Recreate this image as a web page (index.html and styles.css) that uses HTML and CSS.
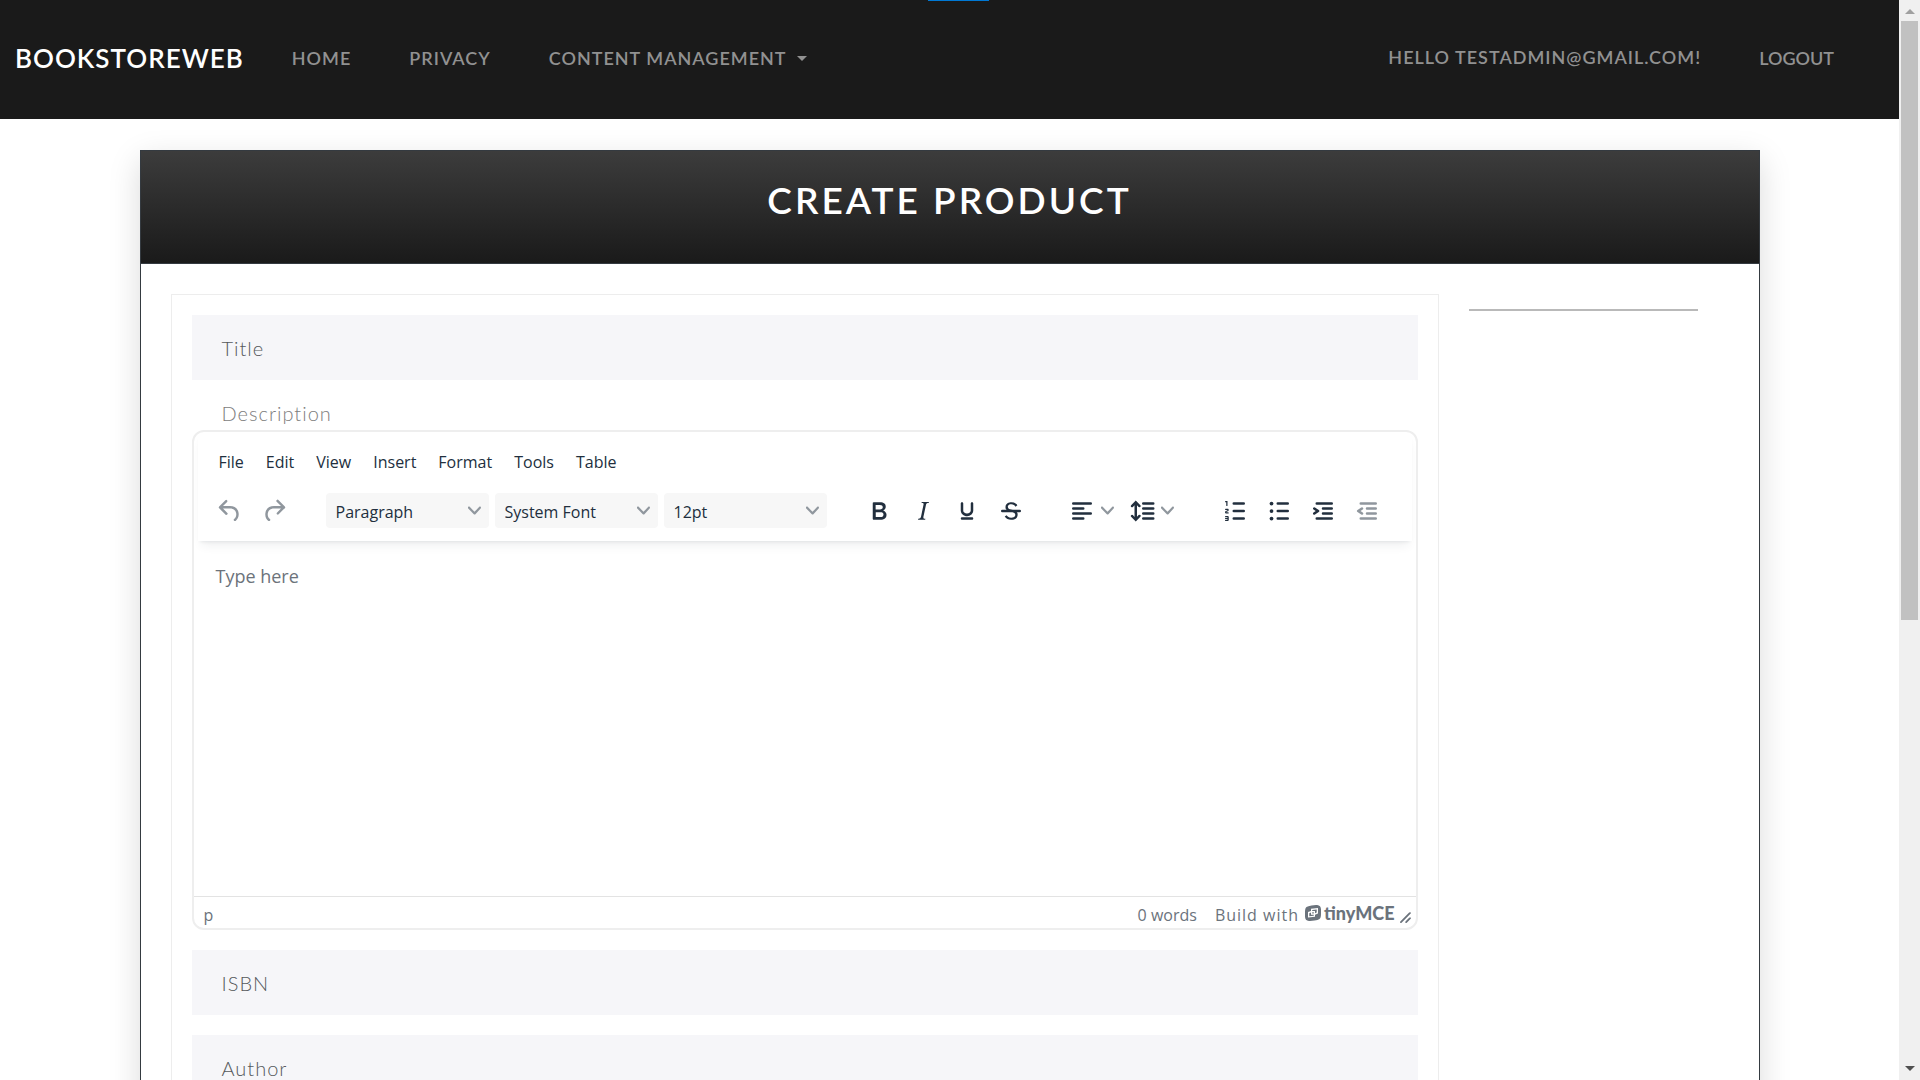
FILE: index.html
```html
<!DOCTYPE html>
<html lang="en">
<head>
<meta charset="utf-8">
<meta name="viewport" content="width=device-width, initial-scale=1">
<title>Create Product - BookStoreWeb</title>
<link rel="stylesheet" href="styles.css">
</head>
<body>
<div class="window-tab" aria-hidden="true"></div>
<header class="navbar">
  <a class="brand" href="#">BOOKSTOREWEB</a>
  <nav class="nav-main">
    <a class="nav-link" href="#">HOME</a>
    <a class="nav-link" href="#">PRIVACY</a>
    <a class="nav-link dropdown" href="#">CONTENT MANAGEMENT</a>
  </nav>
  <div class="nav-user">
    <a class="nav-link hello" href="#">HELLO TESTADMIN@GMAIL.COM!</a>
    <button class="logout" type="button">LOGOUT</button>
  </div>
</header>

<main class="container">
  <section class="card">
    <div class="card-header"><h1>CREATE PRODUCT</h1></div>
    <div class="card-body">
      <form class="panel">
        <div class="field">
          <input id="title" type="text"><label for="title">Title</label>
        </div>
        <div class="editor-field">
          <label class="editor-label" for="description">Description</label>
          <div class="editor">
            <div class="editor-header">
              <div class="menubar">
                <button type="button">File</button>
                <button type="button">Edit</button>
                <button type="button">View</button>
                <button type="button">Insert</button>
                <button type="button">Format</button>
                <button type="button">Tools</button>
                <button type="button">Table</button>
              </div>
              <div class="toolbar">
                <div class="group">
                  <button class="tool off" type="button" aria-label="Undo"><svg viewBox="0 0 24 24"><path d="M6.4 8H12c3.7 0 6.2 2 6.8 5.1.6 2.7-.4 5.6-2.3 6.8a1 1 0 0 1-1-1.8c1.1-.6 1.8-2.7 1.4-4.6-.5-2.1-2.1-3.5-4.9-3.5H6.4l3.3 3.3a1 1 0 1 1-1.4 1.4l-5-5a1 1 0 0 1 0-1.4l5-5a1 1 0 0 1 1.4 1.4L6.4 8Z"/></svg></button>
                  <button class="tool off" type="button" aria-label="Redo"><svg viewBox="0 0 24 24"><path d="M17.6 10H12c-2.8 0-4.4 1.4-4.9 3.5-.4 2 .3 4 1.4 4.6a1 1 0 1 1-1 1.8c-2-1.2-2.9-4.1-2.3-6.8.6-3 3-5.1 6.8-5.1h5.6l-3.3-3.3a1 1 0 1 1 1.4-1.4l5 5a1 1 0 0 1 0 1.4l-5 5a1 1 0 0 1-1.4-1.4l3.3-3.3Z"/></svg></button>
                </div>
                <div class="group pickers">
                  <div class="picker"><select aria-label="Block format"><option>Paragraph</option></select><svg class="chevron" viewBox="0 0 10 10"><path d="M8.7 2.2c.3-.3.8-.3 1 0 .4.4.4.9 0 1.2L5.7 7.8c-.3.3-.9.3-1.2 0L.2 3.4a.8.8 0 0 1 0-1.2c.3-.3.8-.3 1.1 0L5 6l3.7-3.8Z"/></svg></div>
                  <div class="picker"><select aria-label="Font"><option>System Font</option></select><svg class="chevron" viewBox="0 0 10 10"><path d="M8.7 2.2c.3-.3.8-.3 1 0 .4.4.4.9 0 1.2L5.7 7.8c-.3.3-.9.3-1.2 0L.2 3.4a.8.8 0 0 1 0-1.2c.3-.3.8-.3 1.1 0L5 6l3.7-3.8Z"/></svg></div>
                  <div class="picker"><select aria-label="Font size"><option>12pt</option></select><svg class="chevron" viewBox="0 0 10 10"><path d="M8.7 2.2c.3-.3.8-.3 1 0 .4.4.4.9 0 1.2L5.7 7.8c-.3.3-.9.3-1.2 0L.2 3.4a.8.8 0 0 1 0-1.2c.3-.3.8-.3 1.1 0L5 6l3.7-3.8Z"/></svg></div>
                </div>
                <div class="group">
                  <button class="tool" type="button" aria-label="Bold"><svg viewBox="0 0 24 24"><path fill-rule="evenodd" d="M7.8 19c-.3 0-.5 0-.6-.2l-.2-.5V5.7c0-.2 0-.4.2-.5l.6-.2h5c1.5 0 2.7.3 3.5 1 .7.6 1.1 1.4 1.1 2.5a3 3 0 0 1-.6 1.9c-.4.6-1 1-1.6 1.2.4.1.9.3 1.3.6s.8.7 1 1.2c.4.4.5 1 .5 1.6 0 1.3-.4 2.3-1.3 3-.8.7-2.1 1-3.8 1H7.8Zm5-8.3c.6 0 1.2-.1 1.6-.5.4-.3.6-.7.6-1.3 0-1.1-.8-1.7-2.3-1.7H9.3v3.5h3.4Zm.5 6c.7 0 1.3-.1 1.7-.4.4-.4.6-.9.6-1.5s-.2-1-.7-1.4c-.4-.3-1-.4-2-.4H9.4v3.8h4Z"/></svg></button>
                  <button class="tool" type="button" aria-label="Italic"><svg viewBox="0 0 24 24"><path d="m16.7 4.7-.1.9h-.3c-.6 0-1 0-1.4.3-.3.3-.4.6-.5 1.1l-2.1 9.8v.6c0 .5.4.8 1.4.8h.2l-.2.8H8l.2-.8h.2c1.1 0 1.8-.5 2-1.5l2-9.8.1-.5c0-.6-.4-.8-1.4-.8h-.3l.2-.9h5.8Z"/></svg></button>
                  <button class="tool" type="button" aria-label="Underline"><svg viewBox="0 0 24 24"><path d="M16 5c.6 0 1 .4 1 1v5.5a4 4 0 0 1-.4 1.8l-1 1.4a5.3 5.3 0 0 1-5.5 1 5 5 0 0 1-1.6-1c-.5-.4-.8-.9-1.1-1.4a4 4 0 0 1-.4-1.8V6c0-.6.4-1 1-1s1 .4 1 1v5.5c0 .3 0 .6.2 1l.6.7a3.3 3.3 0 0 0 2.2.8 3.4 3.4 0 0 0 2.2-.8c.3-.2.4-.5.6-.8l.2-.9V6c0-.6.4-1 1-1ZM8 17h8c.6 0 1 .4 1 1s-.4 1-1 1H8a1 1 0 0 1 0-2Z"/></svg></button>
                  <button class="tool" type="button" aria-label="Strikethrough"><svg viewBox="0 0 24 24"><path d="M15.6 8.5c-.5-.7-1-1.1-1.3-1.3-.6-.4-1.3-.6-2-.6-2.7 0-2.8 1.7-2.8 2.1 0 1.6 1.8 2 3.2 2.3 4.4.9 4.6 2.8 4.6 3.9 0 1.4-.7 4.1-5 4.1A6.2 6.2 0 0 1 7 16.4l1.5-1.1c.4.6 1.6 2 3.7 2 1.6 0 2.5-.4 3-1.2.4-.8.3-2-.8-2.6-.7-.4-1.6-.7-2.9-1-1-.2-3.9-.8-3.9-3.6C7.6 6 10.3 5 12.4 5c2.9 0 4.2 1.6 4.7 2.4l-1.5 1.1Z"/><path d="M5 11h14a1 1 0 0 1 0 2H5a1 1 0 0 1 0-2Z"/></svg></button>
                </div>
                <div class="group align">
                  <button class="tool split" type="button" aria-label="Align"><svg viewBox="0 0 24 24"><path d="M5 5h14a1 1 0 0 1 0 2H5a1 1 0 0 1 0-2Zm0 4h8a1 1 0 0 1 0 2H5a1 1 0 0 1 0-2Zm0 4h14a1 1 0 0 1 0 2H5a1 1 0 0 1 0-2Zm0 4h8a1 1 0 0 1 0 2H5a1 1 0 0 1 0-2Z"/></svg><svg class="chevron" viewBox="0 0 10 10"><path d="M8.7 2.2c.3-.3.8-.3 1 0 .4.4.4.9 0 1.2L5.7 7.8c-.3.3-.9.3-1.2 0L.2 3.4a.8.8 0 0 1 0-1.2c.3-.3.8-.3 1.1 0L5 6l3.7-3.8Z"/></svg></button>
                  <button class="tool split" type="button" aria-label="Line height"><svg viewBox="0 0 24 24"><path d="M21 5a1 1 0 0 1 0 2h-8a1 1 0 0 1 0-2h8Zm0 4a1 1 0 0 1 0 2h-8a1 1 0 0 1 0-2h8Zm0 4a1 1 0 0 1 0 2h-8a1 1 0 0 1 0-2h8Zm0 4a1 1 0 0 1 0 2h-8a1 1 0 0 1 0-2h8ZM7 3.6l3.7 3.7a1 1 0 0 1-1.3 1.5h-.1L8 7.3v9.2l1.3-1.3a1 1 0 0 1 1.3 0h.1c.4.4.4 1 0 1.3v.1L7 20.4l-3.7-3.7a1 1 0 0 1 1.3-1.5h.1L6 16.7V7.4L4.7 8.7a1 1 0 0 1-1.3 0h-.1a1 1 0 0 1 0-1.3v-.1L7 3.6Z"/></svg><svg class="chevron" viewBox="0 0 10 10"><path d="M8.7 2.2c.3-.3.8-.3 1 0 .4.4.4.9 0 1.2L5.7 7.8c-.3.3-.9.3-1.2 0L.2 3.4a.8.8 0 0 1 0-1.2c.3-.3.8-.3 1.1 0L5 6l3.7-3.8Z"/></svg></button>
                </div>
                <div class="group">
                  <button class="tool" type="button" aria-label="Numbered list"><svg viewBox="0 0 24 24"><path d="M11 17h8a1 1 0 0 1 0 2h-8a1 1 0 0 1 0-2Zm0-6h8a1 1 0 0 1 0 2h-8a1 1 0 0 1 0-2Zm0-6h8a1 1 0 0 1 0 2h-8a1 1 0 0 1 0-2ZM6 4v3.5c0 .3-.2.5-.5.5a.5.5 0 0 1-.5-.5V5h-.5a.5.5 0 0 1 0-1H6Zm-1 8.8.2.2h1.3c.3 0 .5.2.5.5s-.2.5-.5.5H4.9a1 1 0 0 1-.9-1V13c0-.4.3-.8.6-1l1.2-.4.2-.3a.2.2 0 0 0-.2-.2H4.5a.5.5 0 0 1-.5-.5c0-.3.2-.5.5-.5h1.6c.5 0 .9.4.9 1v.1c0 .4-.3.8-.6 1l-1.2.4-.2.3ZM7 17v2c0 .6-.4 1-1 1H4.5a.5.5 0 0 1 0-1h1.2c.2 0 .3-.1.3-.3 0-.2-.1-.3-.3-.3H4.4a.4.4 0 1 1 0-.8h1.3c.2 0 .3-.1.3-.3 0-.2-.1-.3-.3-.3H4.5a.5.5 0 1 1 0-1H6c.6 0 1 .4 1 1Z"/></svg></button>
                  <button class="tool" type="button" aria-label="Bullet list"><svg viewBox="0 0 24 24"><path d="M11 17h8a1 1 0 0 1 0 2h-8a1 1 0 0 1 0-2Zm0-6h8a1 1 0 0 1 0 2h-8a1 1 0 0 1 0-2Zm0-6h8a1 1 0 0 1 0 2h-8a1 1 0 0 1 0-2Z"/><circle cx="6" cy="6" r="1.5"/><circle cx="6" cy="12" r="1.5"/><circle cx="6" cy="18" r="1.5"/></svg></button>
                  <button class="tool" type="button" aria-label="Increase indent"><svg viewBox="0 0 24 24"><path d="M7 5h12a1 1 0 0 1 0 2H7a1 1 0 0 1 0-2Zm5 4h7a1 1 0 0 1 0 2h-7a1 1 0 0 1 0-2Zm0 4h7a1 1 0 0 1 0 2h-7a1 1 0 0 1 0-2Zm-5 4h12a1 1 0 0 1 0 2H7a1 1 0 0 1 0-2Zm-2.6-3.8L6.2 12l-1.8-1.2a1 1 0 0 1 1.2-1.6l3 2a1 1 0 0 1 0 1.6l-3 2a1 1 0 1 1-1.2-1.6Z"/></svg></button>
                  <button class="tool off" type="button" aria-label="Decrease indent"><svg viewBox="0 0 24 24"><path d="M7 5h12a1 1 0 0 1 0 2H7a1 1 0 0 1 0-2Zm5 4h7a1 1 0 0 1 0 2h-7a1 1 0 0 1 0-2Zm0 4h7a1 1 0 0 1 0 2h-7a1 1 0 0 1 0-2Zm-5 4h12a1 1 0 0 1 0 2H7a1 1 0 0 1 0-2Zm1.6-3.8a1 1 0 0 1-1.2 1.6l-3-2a1 1 0 0 1 0-1.6l3-2a1 1 0 0 1 1.2 1.6L6.8 12l1.8 1.2Z"/></svg></button>
                </div>
              </div>
            </div>
            <textarea id="description" placeholder="Type here"></textarea>
            <div class="statusbar">
              <span>p</span>
              <span class="words">0 words</span>
              <a class="branding" href="#">Build with
                <span class="tiny"><svg viewBox="0 0 16 16"><path fill-rule="evenodd" d="M6.500.500 11 0q5-.3 5 4.500V9q0 4-1.500 5-1.500 1-5 1.500L5 16q-5 .3-5-4.500V7q0-4 1.500-5 1.500-1 5-1.500ZM6 3.700V6L3 7v5.500l7-.7V9.700L13 8.500V3ZM7.200 5 11.700 4.500V7.500L10 8.200V6H7.200ZM4.300 8.200 6 7.500V9.700H8.800V10.700L4.300 11.200ZM7.200 7.200H8.800V8.600H7.200Z"/></svg>tinyMCE</span></a>
              <svg class="resize" viewBox="0 0 10 10"><path d="M8.1 1.1A.5.5 0 1 1 9 2l-7 7A.5.5 0 1 1 1 8l7-7ZM8.1 5.1A.5.5 0 1 1 9 6L6 9A.5.5 0 1 1 5 8l3-3Z"/></svg>
            </div>
          </div>
        </div>
        <div class="field">
          <input id="isbn" type="text"><label for="isbn">ISBN</label>
        </div>
        <div class="field">
          <input id="author" type="text"><label for="author">Author</label>
        </div>
      </form>
      <aside class="side"><hr></aside>
    </div>
  </section>
</main>

<div class="scrollbar" aria-hidden="true">
  <svg class="arrow up" viewBox="0 0 10 5"><path d="M0 5 5 0l5 5Z"/></svg>
  <div class="thumb"></div>
  <svg class="arrow" viewBox="0 0 10 5"><path d="M0 0h10L5 5Z"/></svg>
</div>
</body>
</html>
```
FILE: styles.css
```css
* { box-sizing: border-box; }

html { height: 100%; overflow: hidden; }

body {
  margin: 0;
  padding-right: 21px;
  height: 100%;
  overflow: hidden;
  background: #fff;
  color: #919191;
  font-family: Lato, "Open Sans", sans-serif;
}

button, input, select, textarea {
  margin: 0;
  padding: 0;
  border: 0;
  background: none;
  color: inherit;
  font: inherit;
}

a { color: inherit; text-decoration: none; }
svg { display: block; fill: currentColor; }

.window-tab {
  position: absolute;
  top: 0;
  left: calc(50% - 32px);
  width: 61px;
  height: 1px;
  background: #0078d4;
}

/* Top bar */
.navbar {
  display: flex;
  align-items: center;
  height: 119px;
  padding: 0 65px 3px 15px;
  background: #1a1a1a;
  font-family: Lato, sans-serif;
  font-size: 18px;
  font-weight: 600;
}

.brand {
  margin-right: 48px;
  color: #fff;
  font-size: 26px;
  letter-spacing: 1px;
}

.nav-main { display: flex; gap: 58px; }
.nav-link { letter-spacing: 1px; }

.dropdown { display: flex; align-items: center; gap: 10px; }
.dropdown::after {
  content: "";
  border: 5px solid transparent;
  border-top-color: currentColor;
  border-bottom: 0;
}

.nav-user {
  display: flex;
  align-items: center;
  gap: 58px;
  margin-left: auto;
}
.hello { padding-bottom: 3px; }

/* Card */
.container {
  max-width: 1650px;
  margin: 0 auto;
  padding: 31px 15px;
}

.card {
  border: 1px solid #343a40;
  background: #fff;
  box-shadow: 0 10px 30px rgba(0, 0, 0, .15);
}

.card-header {
  padding: 24px 20px 39px;
  border-bottom: 1px solid #343a40;
  background: linear-gradient(#3c3c3c, #1a1a1a);
}

.card-header h1 {
  margin: 0;
  color: #fff;
  font-size: 37px;
  font-weight: 600;
  line-height: 49px;
  letter-spacing: 3px;
  text-align: center;
}

.card-body {
  display: grid;
  grid-template-columns: minmax(0, 1fr) 260px;
  gap: 30px;
  padding: 30px;
}

.panel {
  display: flex;
  flex-direction: column;
  gap: 20px;
  padding: 20px;
  border: 1px solid #ededed;
}

.side { padding: 15px 31px 0 0; }
.side hr { margin: 0; border: 0; border-top: 2px solid #b9b9b9; }

/* Text fields with the label lying in the box */
.field { display: grid; }
.field input, .field label { grid-area: 1 / 1; }
.field input { width: 100%; height: 65px; padding: 0 30px; background: #f6f6f9; }
.field label { align-self: center; padding: 0 30px; color: #55595c; }

.field label, .editor-label {
  font-size: 20px;
  font-weight: 300;
  line-height: 30px;
  letter-spacing: 1px;
}

.editor-label { display: block; margin-top: -2px; padding: 0 30px 2px; color: #7d7d7d; }

/* Rich text editor */
.editor {
  display: flex;
  flex-direction: column;
  height: 500px;
  border: 2px solid #eee;
  border-radius: 12px;
  overflow: hidden;
  color: #222f3e;
  font-family: "Open Sans", sans-serif;
  font-size: 16px;
}

.editor-header {
  margin: 0 4px;
  padding: 12px 0 0;
  box-shadow: 0 3px 3px -2px rgba(34, 47, 62, .08), 0 8px 10px -4px rgba(34, 47, 62, .08);
}

.menubar { display: flex; gap: 22px; padding: 0 21px; line-height: 36px; }

.toolbar { display: flex; align-items: center; height: 61px; padding: 0 11px; }
.group { display: flex; align-items: center; gap: 2px; }
.pickers { gap: 6px; margin: 0 31px; }

.tool {
  display: flex;
  align-items: center;
  justify-content: center;
  width: 42px;
  height: 35px;
}
.tool svg { flex: none; width: 30px; height: 30px; }
.tool.off, .off svg, .chevron { color: #90979e; }

.split { justify-content: flex-start; width: 56px; gap: 4px; }
.align { gap: 4px; margin: 0 31px 0 35px; }
.tool .chevron, .chevron { width: 13px; height: 13px; }

.picker { display: grid; width: 163px; height: 35px; }
.picker select, .picker .chevron { grid-area: 1 / 1; }
.picker select {
  appearance: none;
  padding: 2px 10px 0;
  border-radius: 4px;
  background: #f7f7f7;
}
.picker .chevron { place-self: center end; margin-right: 8px; pointer-events: none; }

.editor textarea {
  flex: 1;
  padding: 21px 22px;
  resize: none;
  outline: 0;
  font-size: 18px;
  line-height: 28px;
}
.editor textarea::placeholder { color: #6c737b; opacity: 1; }

.statusbar {
  display: flex;
  align-items: center;
  height: 32px;
  padding: 4px 4px 0 10px;
  border-top: 1px solid #e3e3e3;
  color: #6b737c;
}
.words { margin-left: auto; }
.branding { display: flex; align-items: center; gap: 6px; margin-left: 18px; letter-spacing: 1px; }
.tiny {
  display: flex;
  align-items: center;
  gap: 3px;
  padding-bottom: 3px;
  font-family: Lato, sans-serif;
  font-size: 18px;
  font-weight: 900;
  line-height: 20px;
  letter-spacing: 0;
}
.tiny svg { width: 16px; height: 16px; }
.resize { align-self: flex-end; width: 13px; height: 13px; margin: 0 0 4px 4px; }

/* Page scroll bar */
.scrollbar {
  position: fixed;
  inset: 0 0 0 auto;
  display: flex;
  flex-direction: column;
  align-items: center;
  width: 21px;
  padding: 9px 0;
  background: #f0f0f0;
  color: #505050;
}
.arrow { width: 10px; height: 5px; }
.arrow.up { color: #a0a0a0; }
.thumb { width: 17px; height: calc(56% + 4px); margin: 7px 0 auto; background: #c1c1c1; }
```
